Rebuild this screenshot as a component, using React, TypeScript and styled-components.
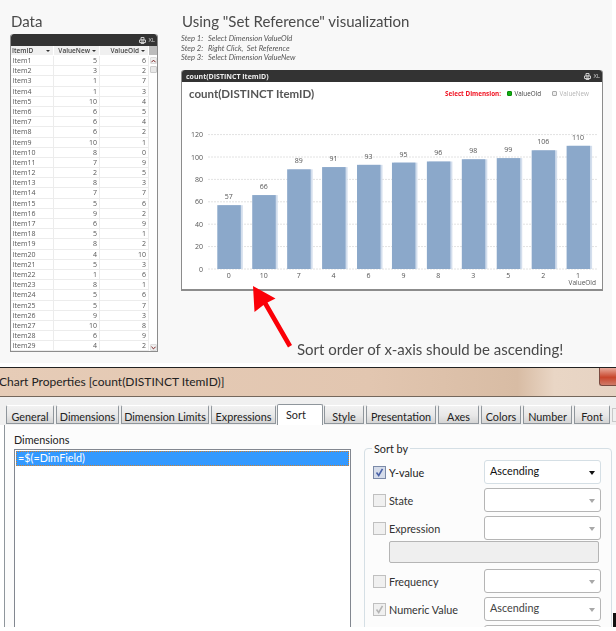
import React from 'react'
import styled, { createGlobalStyle } from 'styled-components'

const items: [number, number][] = [
  [5, 6], [3, 2], [1, 7], [1, 3], [10, 4], [6, 5], [6, 4], [6, 2], [10, 1], [8, 0],
  [7, 9], [2, 5], [8, 3], [7, 7], [5, 6], [9, 2], [6, 9], [5, 1], [8, 2], [4, 10],
  [5, 3], [1, 6], [8, 1], [5, 6], [5, 7], [9, 3], [10, 8], [6, 9], [4, 2],
]

const bars = [
  { label: '0', value: 57 }, { label: '10', value: 66 }, { label: '7', value: 89 },
  { label: '4', value: 91 }, { label: '6', value: 93 }, { label: '9', value: 95 },
  { label: '8', value: 96 }, { label: '3', value: 98 }, { label: '5', value: 99 },
  { label: '2', value: 106 }, { label: '1', value: 110 },
]

const tabs = [
  { name: 'General', w: 48 }, { name: 'Dimensions', w: 63 }, { name: 'Dimension Limits', w: 88 },
  { name: 'Expressions', w: 65 }, { name: 'Sort', w: 46, active: true }, { name: 'Style', w: 40 },
  { name: 'Presentation', w: 70 }, { name: 'Axes', w: 41 }, { name: 'Colors', w: 40 },
  { name: 'Number', w: 49 }, { name: 'Font', w: 36 },
]

const BASE_Y = 165
const unit = 1.12

const CaptionIcons = () => (
  <IconGroup>
    <svg width="7" height="7" viewBox="0 0 7 7">
      <path d="M2 .5h3v2.5H2zM.5 3h6v2.5H.5zM2 5h3v1.5H2z" fill="none" stroke="#ccc" strokeWidth="1" />
    </svg>
    <span>XL</span>
  </IconGroup>
)

const Chart = () => (
  <svg width="420" height="186" viewBox="0 0 420 186">
    {[0, 20, 40, 60, 80, 100, 120].map((tick) => {
      const y = BASE_Y - tick * unit
      return (
        <g key={tick}>
          <line x1="26" x2="416" y1={y} y2={y} stroke="#e2e2e2" strokeWidth="1" strokeDasharray="2 1" />
          <text x="21" y={y + 2.5} textAnchor="end" fontSize="7" fill="#555" fontFamily="'Open Sans', sans-serif">{tick}</text>
        </g>
      )
    })}
    {bars.map((bar, i) => {
      const x = 35.3 + i * 34.93
      const h = bar.value * unit
      return (
        <g key={bar.label}>
          <rect x={x + 2} y={BASE_Y - h} width="23.5" height={h} fill="#d3deed" />
          <rect x={x} y={BASE_Y - h} width="23.5" height={h} fill="#8ba8ca" />
          <text x={x + 11.5} y={BASE_Y - h - 6} textAnchor="middle" fontSize="7" fill="#555" fontFamily="'Open Sans', sans-serif">{bar.value}</text>
          <text x={x + 11.5} y={BASE_Y + 8.5} textAnchor="middle" fontSize="7" fill="#555" fontFamily="'Open Sans', sans-serif">{bar.label}</text>
        </g>
      )
    })}
    <text x="414" y="181" textAnchor="end" fontSize="6.5" fill="#555" fontFamily="'Open Sans', sans-serif">ValueOld</text>
  </svg>
)

const CheckMark = ({ color }: { color: string }) => (
  <svg width="11" height="11" viewBox="0 0 11 11">
    <path d="M2.5 5.5 L4.7 8.5 L8.5 1.8" fill="none" stroke={color} strokeWidth="1.6" />
  </svg>
)

const App = () => (
  <>
    <GlobalStyle />
    <Report>
      <DataColumn>
        <Heading>Data</Heading>
        <TableBox>
          <Caption $h={12}><CaptionIcons /></Caption>
          <TableHead>
            <HeadCell $w={43}>ItemID<Sorter /></HeadCell>
            <HeadCell $w={46} $right>ValueNew<Sorter /></HeadCell>
            <HeadCell $w={49} $right>ValueOld<Sorter /></HeadCell>
            <ScrollCorner />
          </TableHead>
          <TableBody>
            <Rows>
              {items.map(([next, old], i) => (
                <Row key={i}>
                  <Cell $w={43}>Item{i + 1}</Cell>
                  <Cell $w={46} $right>{next}</Cell>
                  <Cell $w={49} $right>{old}</Cell>
                </Row>
              ))}
            </Rows>
            <ScrollBar>
              <ScrollButton>
                <svg width="6" height="4" viewBox="0 0 6 4"><path d="M.5 3.5 L3 1 L5.5 3.5" fill="none" stroke="#7a2020" strokeWidth="1.2" /></svg>
              </ScrollButton>
              <ScrollThumb />
              <ScrollButton $end>
                <svg width="6" height="4" viewBox="0 0 6 4"><path d="M.5 .5 L3 3 L5.5 .5" fill="none" stroke="#7a2020" strokeWidth="1.2" /></svg>
              </ScrollButton>
            </ScrollBar>
          </TableBody>
        </TableBox>
      </DataColumn>
      <ChartColumn>
        <Heading>Using "Set Reference" visualization</Heading>
        <Steps>
          <span>Step 1:</span><span>Select Dimension ValueOld</span>
          <span>Step 2:</span><span>Right Click,  Set Reference</span>
          <span>Step 3:</span><span>Select Dimension ValueNew</span>
        </Steps>
        <ChartBox>
          <Caption $h={12}>
            <CaptionTitle>count(DISTINCT ItemID)</CaptionTitle>
            <CaptionIcons />
          </Caption>
          <ChartHeader>
            <ChartTitle>count(DISTINCT ItemID)</ChartTitle>
            <Legend>
              <LegendLabel>Select Dimension:</LegendLabel>
              <LegendItem><Led $on />ValueOld</LegendItem>
              <LegendItem $muted><Led />ValueNew</LegendItem>
            </Legend>
          </ChartHeader>
          <Chart />
        </ChartBox>
        <Note>Sort order of x-axis should be ascending!</Note>
      </ChartColumn>
      <ArrowLayer width="60" height="70" viewBox="0 0 60 70">
        <path d="M1 1 L23.5 13.5 L15.5 17.5 L40 60 L36 62.5 L11.5 20 L2.5 27 Z" fill="#fb0007" />
      </ArrowLayer>
    </Report>

    <Dialog>
      <TitleBar>
        <TitleText>Chart Properties [count(DISTINCT ItemID)]</TitleText>
        <CloseButton />
      </TitleBar>
      <TabStrip>
        {tabs.map((tab) => (
          <Tab key={tab.name} $w={tab.w} $active={tab.active}>{tab.name}</Tab>
        ))}
        <TabScroll>
          <svg width="5" height="7" viewBox="0 0 5 7"><path d="M4 0 L0 3.5 L4 7 Z" fill="#8f969c" /></svg>
        </TabScroll>
      </TabStrip>
      <Panel>
        <LeftPane>
          <FieldLabel>Dimensions</FieldLabel>
          <ListBox>
            <ListItem>=$(=DimField)</ListItem>
          </ListBox>
        </LeftPane>
        <SortGroup>
          <SortLegend>Sort by</SortLegend>
          <FormRow>
            <CheckLabel><CheckBox $checked><CheckMark color="#4a62a8" /></CheckBox>Y-value</CheckLabel>
            <Select>Ascending<Caret /></Select>
          </FormRow>
          <FormRow>
            <CheckLabel $disabled><CheckBox /> State</CheckLabel>
            <Select $disabled><Caret $disabled /></Select>
          </FormRow>
          <FormRow>
            <CheckLabel $disabled><CheckBox /> Expression</CheckLabel>
            <Select $disabled><Caret $disabled /></Select>
          </FormRow>
          <ExpressionBox />
          <FormRow>
            <CheckLabel $disabled><CheckBox /> Frequency</CheckLabel>
            <Select $disabled><Caret $disabled /></Select>
          </FormRow>
          <FormRow>
            <CheckLabel $disabled><CheckBox><CheckMark color="#b5b5b5" /></CheckBox>Numeric Value</CheckLabel>
            <Select $disabled>Ascending<Caret $disabled /></Select>
          </FormRow>
          <FormRow>
            <CheckLabel $disabled />
            <Select $disabled />
          </FormRow>
        </SortGroup>
        <EdgeMark />
      </Panel>
    </Dialog>
  </>
)

export default App

const GlobalStyle = createGlobalStyle`
  html, body {
    margin: 0;
    padding: 0;
    background: #fff;
  }
  body {
    width: 616px;
    height: 631px;
    overflow: hidden;
    font-family: 'Open Sans', sans-serif;
  }
`

const Report = styled.div`
  position: relative;
  display: flex;
  gap: 23px;
  width: 612px;
  height: 363px;
  padding: 11px 0 0 10px;
  box-sizing: border-box;
  background: #f8f8f8;
  filter: blur(0.25px);
`

const DataColumn = styled.div`
  width: 148px;
`

const ChartColumn = styled.div`
  width: 422px;
`

const Heading = styled.h1`
  margin: 0 0 0 1px;
  height: 23px;
  font-family: 'Lato', sans-serif;
  font-size: 15px;
  line-height: 20px;
  font-weight: 400;
  color: #4a4a4a;
  white-space: nowrap;
`

const TableBox = styled.div`
  height: 318px;
  border: 1px solid #8c8c8c;
  border-top: 0;
  border-radius: 3px 3px 0 0;
  box-sizing: border-box;
  overflow: hidden;
  background: #fff;
`

const Caption = styled.div<{ $h: number }>`
  display: flex;
  align-items: center;
  justify-content: space-between;
  height: ${(p) => p.$h}px;
  padding: 0 2px 0 4px;
  background: #333;
  border-radius: 3px 3px 0 0;
`

const CaptionTitle = styled.span`
  font-size: 7px;
  font-weight: 700;
  color: #eee;
`

const IconGroup = styled.span`
  display: flex;
  align-items: center;
  gap: 2px;
  margin-left: auto;
  font-size: 6px;
  color: #ccc;
`

const TableHead = styled.div`
  display: flex;
  height: 10px;
  background: #f0f0f0;
  border-bottom: 1px solid #fff;
  box-sizing: border-box;
`

const HeadCell = styled.div<{ $w: number; $right?: boolean }>`
  display: flex;
  align-items: center;
  justify-content: ${(p) => (p.$right ? 'flex-end' : 'space-between')};
  gap: 2px;
  width: ${(p) => p.$w}px;
  padding: 0 3px 0 1px;
  box-sizing: border-box;
  font-size: 6.5px;
  font-weight: 600;
  color: #444;
  border-right: 1px solid #fff;
`

const Sorter = styled.span`
  border-top: 2.5px solid #333;
  border-left: 2px solid transparent;
  border-right: 2px solid transparent;
`

const ScrollCorner = styled.div`
  flex: 1;
  background: #bcbcbc;
`

const TableBody = styled.div`
  display: flex;
`

const Rows = styled.div`
  width: 138px;
`

const Row = styled.div`
  display: flex;
  height: 10.2px;
`

const Cell = styled.div<{ $w: number; $right?: boolean }>`
  width: ${(p) => p.$w}px;
  padding: 0 2px 0 1.5px;
  box-sizing: border-box;
  font-size: 7px;
  line-height: 9.5px;
  color: #555;
  text-align: ${(p) => (p.$right ? 'right' : 'left')};
  border-right: 1px solid #ececec;
  border-bottom: 1px solid #ececec;
`

const ScrollBar = styled.div`
  display: flex;
  flex-direction: column;
  align-items: center;
  flex: 1;
  padding-top: 1px;
  height: 295px;
  box-sizing: border-box;
`

const ScrollButton = styled.div<{ $end?: boolean }>`
  display: flex;
  align-items: center;
  justify-content: center;
  width: 7px;
  height: 7px;
  margin-top: ${(p) => (p.$end ? 'auto' : '0')};
  background: #eee;
  border: 1px solid #ddd;
  box-sizing: border-box;
  border-radius: 1px;
`

const ScrollThumb = styled.div`
  width: 7px;
  height: 7px;
  margin-top: 2px;
  background: #e8e8e8;
  border: 1px solid #ccc;
  box-sizing: border-box;
  border-radius: 1px;
`

const Steps = styled.div`
  display: grid;
  grid-template-columns: 27px 1fr;
  grid-auto-rows: 9.6px;
  height: 36px;
  font-family: 'Lato', sans-serif;
  font-size: 7.6px;
  font-style: italic;
  line-height: 9.6px;
  color: #555;
  white-space: pre;
`

const ChartBox = styled.div`
  height: 221px;
  background: #fff;
  border: 1px solid #8c8c8c;
  border-top: 0;
  border-bottom-width: 2px;
  box-sizing: border-box;
  border-radius: 3px 3px 0 0;
`

const ChartHeader = styled.div`
  display: flex;
  align-items: center;
  justify-content: space-between;
  height: 22px;
  padding: 0 13px 0 7px;
`

const ChartTitle = styled.div`
  font-family: 'Lato', sans-serif;
  font-size: 11.5px;
  font-weight: 700;
  color: #555;
`

const Legend = styled.div`
  display: flex;
  align-items: center;
  font-size: 6.3px;
`

const LegendLabel = styled.span`
  font-weight: 700;
  color: #f01020;
  margin-right: 6px;
`

const LegendItem = styled.span<{ $muted?: boolean }>`
  display: flex;
  align-items: center;
  gap: 2.5px;
  margin-right: ${(p) => (p.$muted ? '0' : '11px')};
  color: ${(p) => (p.$muted ? '#b5b5b5' : '#444')};
`

const Led = styled.span<{ $on?: boolean }>`
  width: 5px;
  height: 5px;
  border-radius: 1px;
  background: ${(p) => (p.$on ? '#12b012' : '#eee')};
  border: 1px solid ${(p) => (p.$on ? '#0a8a0a' : '#aaa')};
  box-sizing: border-box;
`

const Note = styled.div`
  margin: 48px 0 0 116px;
  font-family: 'Lato', sans-serif;
  font-size: 15px;
  line-height: 20px;
  color: #4a4a4a;
  white-space: nowrap;
`

const ArrowLayer = styled.svg`
  position: absolute;
  left: 252px;
  top: 285px;
`

const Dialog = styled.div`
  margin-top: 4px;
  border-top: 1px solid #222;
  height: 260px;
  overflow: hidden;
  font-family: 'Lato', sans-serif;
`

const TitleBar = styled.div`
  display: flex;
  justify-content: space-between;
  height: 29px;
  box-sizing: border-box;
  border-bottom: 1px solid #74675c;
  background: linear-gradient(90deg, #e6ccb7 0%, #e2c6b0 60%, #d8bca4 84%, #e9d6c5 90%, #e6d3c3 100%);
`

const TitleText = styled.div`
  margin-left: -1px;
  font-size: 12px;
  line-height: 27px;
  color: #222;
  white-space: nowrap;
`

const CloseButton = styled.div`
  width: 17px;
  height: 18px;
  background: linear-gradient(180deg, #e8a99a 0%, #c8452c 55%, #cf7a68 100%);
  border: 1px solid #7a4a40;
  border-top: 0;
  border-right: 0;
  border-radius: 0 0 0 3px;
  box-sizing: border-box;
`

const TabStrip = styled.div`
  position: relative;
  z-index: 1;
  display: flex;
  align-items: flex-end;
  gap: 2px;
  height: 28px;
  margin-bottom: -1px;
  padding-left: 6px;
  box-sizing: border-box;
  background: #f0f0f0;
`

const Tab = styled.div<{ $w: number; $active?: boolean }>`
  flex: none;
  width: ${(p) => p.$w}px;
  height: ${(p) => (p.$active ? 21 : 19)}px;
  margin: ${(p) => (p.$active ? '0 -1px' : '0 0 1px')};
  padding: ${(p) => (p.$active ? '3px 0 0 8px' : '4px 0 0')};
  box-sizing: border-box;
  text-align: ${(p) => (p.$active ? 'left' : 'center')};
  font-size: 10.8px;
  line-height: 13px;
  color: #222;
  white-space: nowrap;
  background: ${(p) => (p.$active ? '#fff' : 'linear-gradient(180deg, #f2f2f2 0%, #e8e8e8 55%, #d4d4d4 100%)')};
  border: 1px solid #8f969c;
  border-bottom: ${(p) => (p.$active ? '0' : '1px solid #8f969c')};
  border-top-color: ${(p) => (p.$active ? '#8f969c' : '#fff')};
  border-radius: 2px 2px 0 0;
`

const TabScroll = styled.div`
  display: flex;
  align-items: center;
  justify-content: center;
  flex: none;
  width: 12px;
  height: 14px;
  margin: 0 0 3px 0;
  background: #f0f0f0;
  border: 1px solid #c8c8c8;
  box-sizing: border-box;
`

const Panel = styled.div`
  position: relative;
  display: flex;
  margin-left: 4px;
  padding: 8px 0 0 9px;
  height: 203px;
  box-sizing: border-box;
  background: #fcfcfc;
  border-left: 1px solid #8f969c;
  border-top: 1px solid #8f969c;
  overflow: hidden;
`

const LeftPane = styled.div`
  width: 337px;
  flex: none;
`

const FieldLabel = styled.div`
  height: 16px;
  font-size: 10.8px;
  line-height: 14px;
  color: #222;
`

const ListBox = styled.div`
  height: 200px;
  padding: 1px;
  background: #fff;
  border: 1px solid #828790;
  box-sizing: border-box;
`

const ListItem = styled.div`
  height: 15px;
  padding-left: 2px;
  background: #3399ff;
  outline: 1px dotted #d08030;
  outline-offset: -1px;
  color: #fff;
  font-size: 10.8px;
  line-height: 14px;
`

const SortGroup = styled.fieldset`
  flex: none;
  display: flex;
  flex-direction: column;
  gap: 4px;
  width: 248px;
  height: 220px;
  margin: 8px 0 0 13px;
  padding: 4px 10px 0 8px;
  box-sizing: border-box;
  border: 1px solid #d5dfe5;
  border-radius: 4px;
`

const SortLegend = styled.legend`
  padding: 0 2px;
  margin-left: -1px;
  font-size: 10.8px;
  line-height: 15px;
  color: #222;
`

const FormRow = styled.div`
  display: grid;
  grid-template-columns: 111px 117px;
  align-items: center;
  height: 24px;
  flex: none;
`

const CheckLabel = styled.div<{ $disabled?: boolean }>`
  display: flex;
  align-items: center;
  gap: 3px;
  font-size: 10.8px;
  color: ${(p) => (p.$disabled ? '#333' : '#222')};
`

const CheckBox = styled.span<{ $checked?: boolean }>`
  display: flex;
  align-items: center;
  justify-content: center;
  flex: none;
  width: 13px;
  height: 13px;
  box-sizing: border-box;
  background: ${(p) => (p.$checked ? '#d5dcea' : '#f0f0f0')};
  border: 1px solid ${(p) => (p.$checked ? '#7b8aa8' : '#c0c0c0')};
`

const Select = styled.div<{ $disabled?: boolean }>`
  position: relative;
  height: 24px;
  padding-left: 5px;
  box-sizing: border-box;
  font-size: 10.8px;
  line-height: 20px;
  color: ${(p) => (p.$disabled ? '#444' : '#111')};
  background: #fff;
  border: 1px solid ${(p) => (p.$disabled ? '#b5b5b5' : '#d5dfe5')};
  border-radius: 3px;
`

const Caret = styled.span<{ $disabled?: boolean }>`
  position: absolute;
  right: 5px;
  top: 10px;
  border-top: 4px solid ${(p) => (p.$disabled ? '#a8a8a8' : '#111')};
  border-left: 3.5px solid transparent;
  border-right: 3.5px solid transparent;
`

const ExpressionBox = styled.div`
  flex: none;
  width: 210px;
  height: 22px;
  margin: -3px 0 2px 16px;
  background: #efefef;
  border: 1px solid #b5b5b5;
  border-radius: 2px;
  box-sizing: border-box;
`

const EdgeMark = styled.div`
  position: absolute;
  right: 0;
  bottom: 0;
  width: 3px;
  height: 14px;
  background: #111;
`
